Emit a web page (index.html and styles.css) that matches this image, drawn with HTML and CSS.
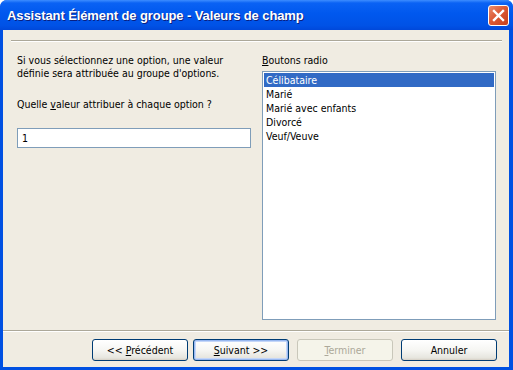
FILE: index.html
```html
<!DOCTYPE html>
<html lang="fr">
<head>
  <meta charset="UTF-8">
  <title>Assistant Élément de groupe - Valeurs de champ</title>
  <link rel="stylesheet" href="styles.css">
</head>
<body>
  <div class="fenetre">
    <div class="barre-titre">
      <span class="titre">Assistant Élément de groupe - Valeurs de champ</span>
      <span class="btn-fermer">
        <svg width="13" height="13" viewBox="0 0 13 13">
          <path d="M2 2 L11 11 M11 2 L2 11" stroke="#fff" stroke-width="2.4" stroke-linecap="square"/>
        </svg>
      </span>
    </div>
    <div class="client">
      <div class="trait"></div>
      <div class="contenu">
        <div class="colonne">
          <p class="texte">Si vous sélectionnez une option, une valeur définie sera attribuée au groupe d'options.</p>
          <p class="texte question">Quelle <u>v</u>aleur attribuer à chaque option ?</p>
          <div class="champ">1</div>
        </div>
        <div class="colonne">
          <p class="texte"><u>B</u>outons radio</p>
          <ul class="liste">
            <li class="choisi">Célibataire</li>
            <li>Marié</li>
            <li>Marié avec enfants</li>
            <li>Divorcé</li>
            <li>Veuf/Veuve</li>
          </ul>
        </div>
      </div>
      <div class="trait pleine"></div>
      <div class="boutons">
        <button class="btn btn-prec">&lt;&lt; <u>P</u>récédent</button>
        <button class="btn defaut"><u>S</u>uivant &gt;&gt;</button>
        <button class="btn inactif" disabled><u>T</u>erminer</button>
        <button class="btn">Annuler</button>
      </div>
    </div>
  </div>
</body>
</html>
```
FILE: styles.css
```css
body {
  margin: 0;
  background: #fff;
}
.fenetre {
  width: 513px;
  height: 370px;
  background: #0050e2;
  border-radius: 7px 7px 0 0;
  display: flex;
  flex-direction: column;
  font-family: 'DejaVu Sans Condensed', 'Liberation Sans', Arial, sans-serif;
  font-size: 10.5px;
  color: #000;
}
.barre-titre {
  height: 30px;
  flex: none;
  display: flex;
  align-items: center;
  padding: 0 7px;
  border-radius: 7px 7px 0 0;
  background: linear-gradient(#3d8dff 0, #0a62f4 3px, #0058ee 45%, #0052e6 85%, #0048da 100%);
}
.titre {
  flex: 1;
  color: #fff;
  font-family: 'Liberation Sans', Arial, sans-serif;
  font-weight: bold;
  font-size: 13px;
  letter-spacing: -0.1px;
  text-shadow: 1px 1px 0 #0a1f80;
  padding-top: 1px;
}
.btn-fermer {
  width: 19px;
  height: 19px;
  margin-right: -3px;
  border: 1px solid #fff;
  border-radius: 3px;
  background: linear-gradient(135deg, #ea8d6e 0%, #dc5a36 45%, #c5401c 100%);
  display: flex;
  align-items: center;
  justify-content: center;
}
.client {
  flex: 1;
  margin: 0 4px 3px 3px;
  background: #f0ece2;
  display: flex;
  flex-direction: column;
}
.trait {
  margin: 10px 7px 0 8px;
  border-top: 1px solid #aca899;
  border-bottom: 1px solid #fff;
}
.trait.pleine {
  margin: 0;
}
.contenu {
  height: 288px;
  display: flex;
  gap: 11px;
  padding: 12px 0 10px 14px;
  box-sizing: border-box;
}
.colonne {
  width: 234px;
  display: flex;
  flex-direction: column;
}
.texte {
  margin: 0;
  line-height: 13px;
}
.question {
  margin: 18px 0 17px;
}
.champ {
  height: 20px;
  box-sizing: border-box;
  border: 1px solid #7f9db9;
  background: #fff;
  padding: 3px 4px 0;
  line-height: 13px;
}
.liste {
  flex: 1;
  margin: 4px 0 0;
  padding: 1px;
  list-style: none;
  border: 1px solid #7f9db9;
  background: #fff;
}
.liste li {
  height: 14px;
  line-height: 14px;
  padding-left: 2px;
}
.liste li.choisi {
  background: #316ac5;
  color: #fff;
}
.boutons {
  display: flex;
  justify-content: flex-end;
  gap: 8px;
  padding: 7px 12px 0 0;
}
.btn {
  width: 96px;
  height: 22px;
  padding: 0;
  font-family: inherit;
  font-size: 10.5px;
  color: #000;
  border: 1px solid #003c74;
  border-radius: 3px;
  background: linear-gradient(#fff 0%, #f6f6f3 50%, #e6e5de 90%, #d6d0c5 100%);
}
.btn-prec {
  margin-right: -3px;
}
.btn.defaut {
  box-shadow: inset 0 0 0 1px #98b8f0, inset 0 0 0 2px #c4d6f8;
}
.btn.inactif {
  border-color: #c9c7ba;
  color: #aca899;
  background: #f5f4ea;
}
```
